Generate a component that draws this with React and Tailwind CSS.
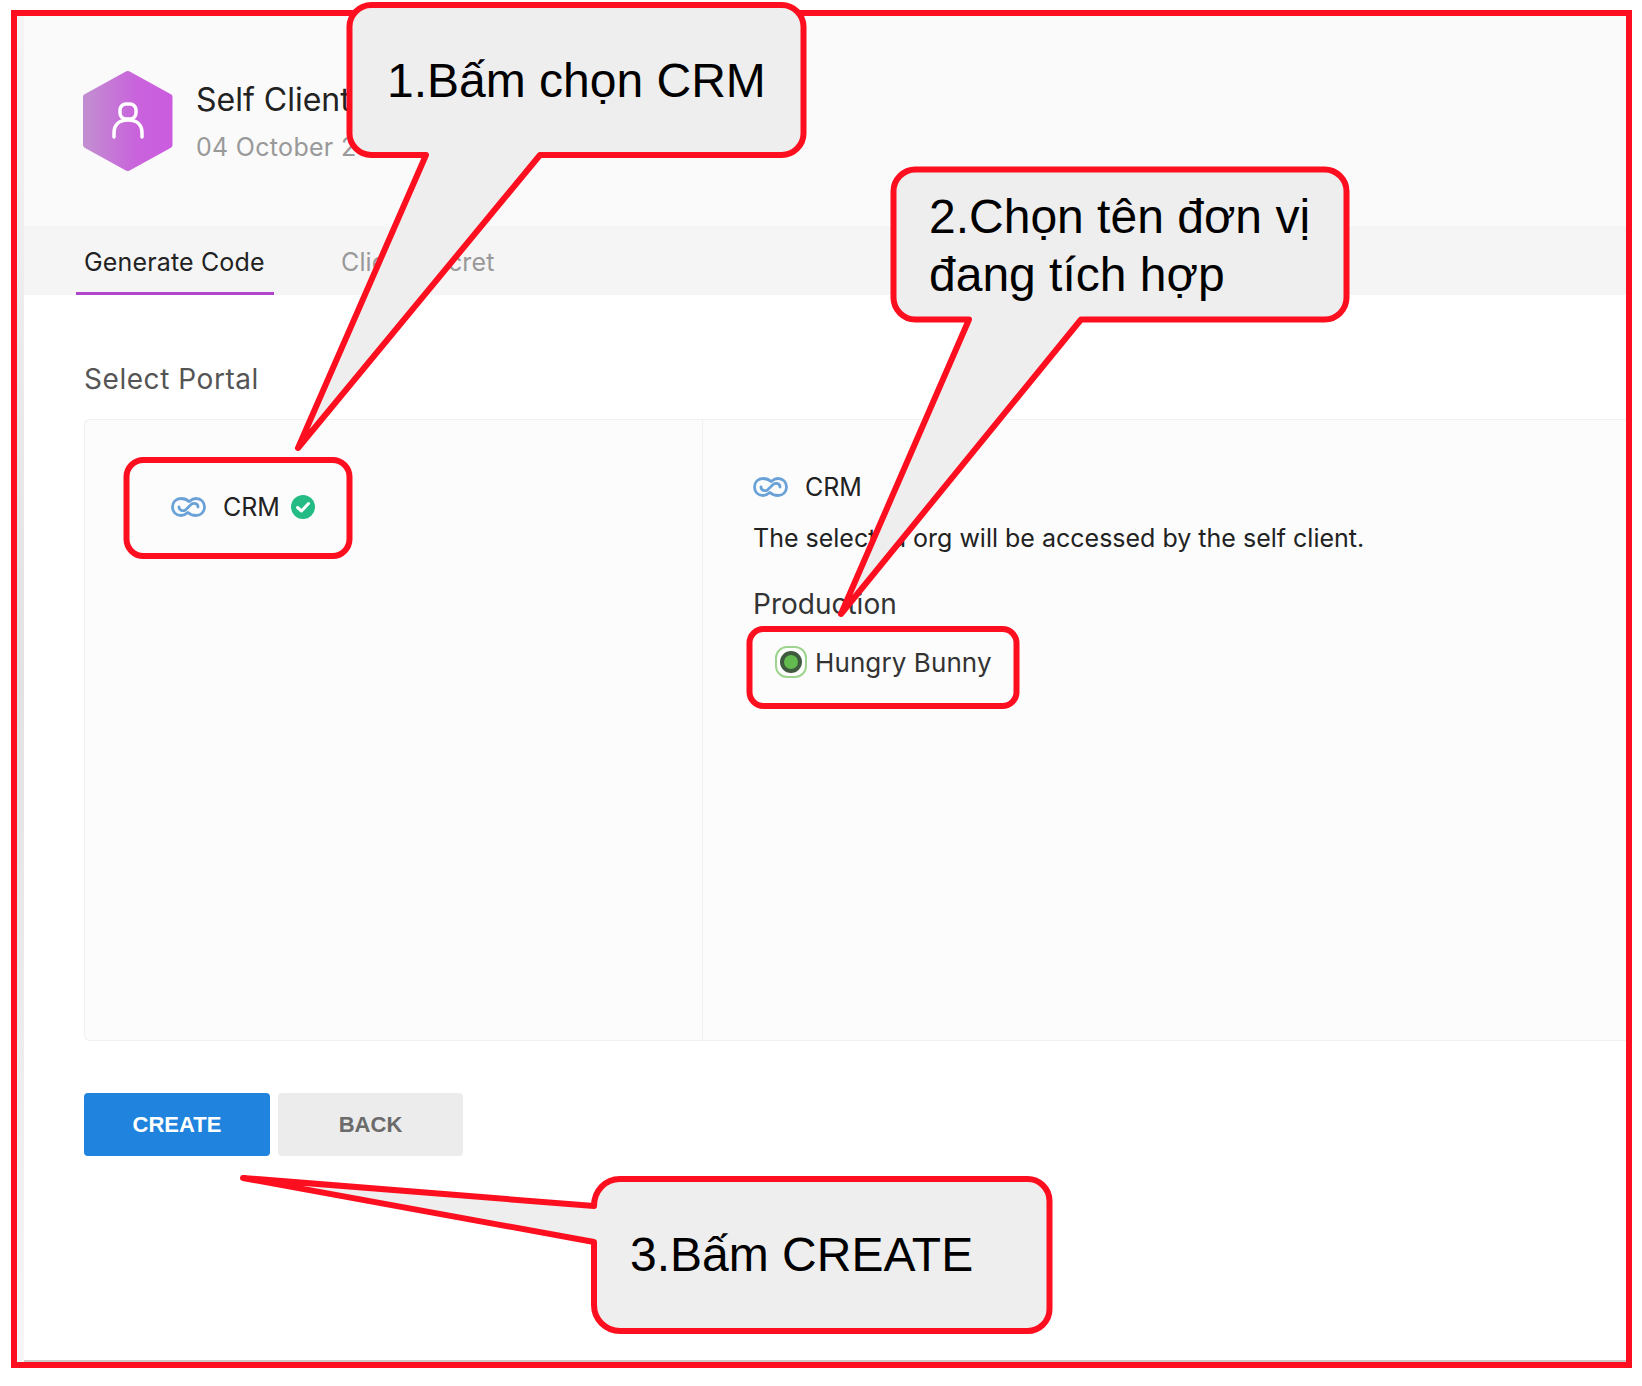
import React from "react";

const RED = "#fe0f1f";

const LinkIcon = () => (
  <svg width="35" height="22" viewBox="0 0 35 22" fill="none" stroke="#6aa2d8" strokeWidth="2.8" strokeLinecap="round">
    <path d="M18 5.5C16 3.5 13 2.5 10 2.5C5 2.5 1.5 6 1.5 11C1.5 16 5 19.5 10 19.5C12.5 19.5 14.5 18.5 16 17" />
    <path d="M17 16.5C19 18.5 22 19.5 25 19.5C30 19.5 33.5 16 33.5 11C33.5 6 30 2.5 25 2.5C22.5 2.5 20.5 3.5 19 5" />
    <path d="M8 11C8 14.5 12 15.5 14.5 14L20.5 8C23 6.5 27 7.5 27 11" />
  </svg>
);

const CheckBadge = () => (
  <svg width="24" height="24" viewBox="0 0 24 24" className="ml-[11px]">
    <circle cx="12" cy="12" r="12" fill="#25bb85" />
    <path d="M6.5 12.5L10.5 16L17.5 8.5" fill="none" stroke="#fff" strokeWidth="3" strokeLinecap="round" strokeLinejoin="round" />
  </svg>
);

const HexLogo = () => (
  <svg width="90" height="100" viewBox="0 0 90 100" className="overflow-visible">
    <defs>
      <linearGradient id="hex" x1="0" y1="0" x2="1" y2="0">
        <stop offset="0" stopColor="#c28dd0" />
        <stop offset="0.6" stopColor="#c963dc" />
        <stop offset="1" stopColor="#cb5cdf" />
      </linearGradient>
    </defs>
    <path d="M43.75 3L85.5 26V74L43.75 97L2 74V26Z" fill="url(#hex)" stroke="url(#hex)" strokeWidth="6" strokeLinejoin="round" />
    <rect x="36" y="33" width="16" height="15" rx="6" fill="none" stroke="#fff" strokeWidth="3.5" />
    <path d="M30 66V62C30 53 36 49 44 49C52 49 58 53 58 62V66" fill="none" stroke="#fff" strokeWidth="3.5" strokeLinecap="round" />
  </svg>
);

const Callouts = () => (
  <svg width="1642" height="1386" className="absolute left-0 top-0" fill="none" stroke={RED} strokeWidth="6" strokeLinejoin="round">
    <rect x="126.5" y="460" width="223" height="96" rx="17" />
    <rect x="749.5" y="629" width="267" height="77" rx="14" />
    <path
      d="M426 155L298 448L540 155H781A22 22 0 0 0 803.5 132V28A22 22 0 0 0 781 5H372A22 22 0 0 0 349.5 28V132A22 22 0 0 0 372 155Z"
      fill="#eeeeee"
    />
    <path
      d="M969 319.5L841 614L1081 319.5H1324A22 22 0 0 0 1346.5 297V192A22 22 0 0 0 1324 169.5H916A22 22 0 0 0 893.5 192V297A22 22 0 0 0 916 319.5Z"
      fill="#eeeeee"
    />
    <path
      d="M594 1206C594 1191 605 1179 620 1179H1027A22 22 0 0 1 1049.5 1201V1309A22 22 0 0 1 1027 1331H620A26 26 0 0 1 594 1305V1242L243 1178Z"
      fill="#eeeeee"
    />
  </svg>
);

export default function App() {
  return (
    <div className="relative h-[1386px] w-[1642px] overflow-hidden bg-white pl-[11px] pt-[10px] font-['Inter',sans-serif]">
      <div className="flex h-[1358px] w-[1621px] overflow-hidden border-[6px] border-[#fe0f1f]">
        <div className="w-[7px] shrink-0 bg-gradient-to-b from-[#f4f4f4] via-[#e2e2e2] to-[#f6f6f6]" />
        <div className="flex min-w-0 flex-1 flex-col border-b-2 border-[#c9c9c9]">
          <div className="flex h-[210px] shrink-0 items-start bg-[#fafafa] pl-[60px] pt-[55px]">
            <HexLogo />
            <div className="ml-[22px] pt-[9px]">
              <div className="text-[32px] leading-[40px] text-[#222]">Self Client</div>
              <div className="mt-[10px] text-[25px] leading-[34px] tracking-[0.3px] text-[#999]">04 October 2021</div>
            </div>
          </div>

          <div className="flex h-[69px] shrink-0 items-start bg-[#f5f5f5] pl-[52px]">
            <div className="h-full w-[198px] border-b-[3px] border-[#b146cc] pl-[8px] pt-[20px] text-[25px] leading-[32px] tracking-[0.15px] text-[#222]">
              Generate Code
            </div>
            <div className="ml-[59px] pl-[8px] pt-[20px] text-[25px] leading-[32px] tracking-[0.15px] text-[#999]">Client Secret</div>
          </div>

          <div className="pl-[60px] pt-[66px] text-[28px] leading-[36px] tracking-[0.55px] text-[#555]">Select Portal</div>

          <div className="ml-[60px] mt-[22px] flex h-[622px] shrink-0 rounded-l-[6px] border border-r-0 border-[#f0f0f0] bg-[#fcfcfc]">
            <div className="w-[618px] shrink-0 border-r border-[#f0f0f0] pl-[86px] pt-[75px]">
              <div className="flex h-[24px] items-center text-[25px] text-[#222]">
                <LinkIcon />
                <span className="ml-[17px] mt-[2px]">CRM</span>
                <CheckBadge />
              </div>
            </div>
            <div className="pl-[50px] pt-[55px]">
              <div className="flex h-[24px] items-center text-[25px] text-[#222]">
                <LinkIcon />
                <span className="ml-[17px] mt-[2px]">CRM</span>
              </div>
              <div className="mt-[23px] text-[25px] leading-[32px] text-[#222]">
                The selected org will be accessed by the self client.
              </div>
              <div className="mt-[32px] text-[28px] leading-[36px] text-[#333]">Production</div>
              <div className="ml-[22px] mt-[24px] flex h-[32px] items-center">
                <span className="flex h-[32px] w-[32px] items-center justify-center rounded-[12px] border-2 border-[#9dd58e] bg-white">
                  <span className="block h-[22px] w-[22px] rounded-full border-[4px] border-[#3f5a3f] bg-[#62bb4e]" />
                </span>
                <span className="ml-[8px] text-[26px] tracking-[0.1px] text-[#333]">Hungry Bunny</span>
              </div>
            </div>
          </div>

          <div className="ml-[60px] mt-[52px] flex gap-[8px] font-['Liberation_Sans',sans-serif] text-[22px] font-bold">
            <button className="h-[63px] w-[186px] rounded-[4px] bg-[#2083dd] text-white">CREATE</button>
            <button className="h-[63px] w-[185px] rounded-[4px] bg-[#ececec] text-[#6b6b6b]">BACK</button>
          </div>
        </div>
      </div>

      <Callouts />

      <div className="absolute left-[387px] top-[52px] whitespace-nowrap font-['Liberation_Sans',sans-serif] text-[48px] leading-[58px] text-black">
        1.Bấm chọn CRM
      </div>
      <div className="absolute left-[929px] top-[188px] whitespace-nowrap font-['Liberation_Sans',sans-serif] text-[48px] leading-[57.6px] text-black">
        2.Chọn tên đơn vị
        <br />
        đang tích hợp
      </div>
      <div className="absolute left-[630px] top-[1226px] whitespace-nowrap font-['Liberation_Sans',sans-serif] text-[48px] leading-[58px] text-black">
        3.Bấm CREATE
      </div>
    </div>
  );
}
